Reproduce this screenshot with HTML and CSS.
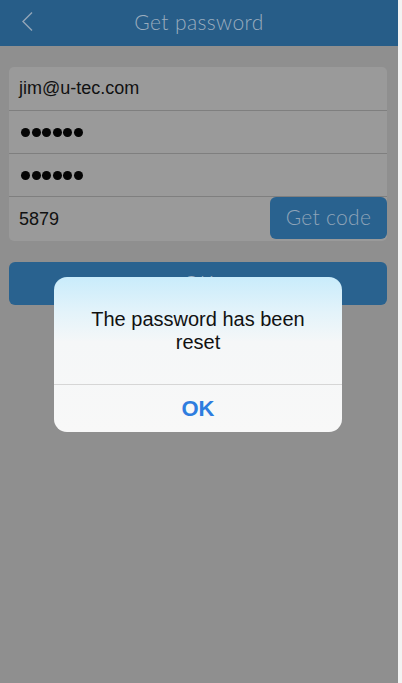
FILE: index.html
```html
<!DOCTYPE html>
<html>
<head>
<meta charset="utf-8">
<link rel="stylesheet" href="styles.css">
</head>
<body>
<div class="page">
  <div class="screen">
    <header class="topbar">
      <svg class="back" width="14" height="22" viewBox="0 0 14 22"><polyline points="10,1.5 1,10.5 10,19.5" fill="none" stroke="#93a6b8" stroke-width="1.4"/></svg>
      <div class="title">Get password</div>
    </header>
    <div class="card">
      <div class="row r1"><span class="val">jim@u-tec.com</span></div>
      <div class="row r2"><span class="dots"><i></i><i></i><i></i><i></i><i></i><i></i></span></div>
      <div class="row r3"><span class="dots"><i></i><i></i><i></i><i></i><i></i><i></i></span></div>
      <div class="row r4"><span class="val">5879</span><button class="code">Get code</button></div>
    </div>
    <button class="ok">OK</button>
    <div class="dialog">
      <div class="msg">The password has been<br>reset</div>
      <div class="dbtn">OK</div>
    </div>
  </div>
  <div class="strip"></div>
</div>
</body>
</html>
```
FILE: styles.css
```css
html, body { margin: 0; padding: 0; }
body { background: #f3f3f3; font-family: "Liberation Sans", Arial, sans-serif; }
.page { display: flex; width: 402px; height: 683px; overflow: hidden; }
.screen { position: relative; width: 398px; height: 683px; background: #8f8f8f; flex: none; }
.strip { flex: 1; background: #f3f3f3; }
.topbar { height: 46px; background: #275d88; display: flex; align-items: center; justify-content: center; position: relative; }
.back { position: absolute; left: 22px; top: 11px; }
.title { font-family: Lato, "Open Sans", sans-serif; font-weight: 300; font-size: 21px; color: #9aacbe; letter-spacing: 0.4px; margin-top: -3px; }
.card { margin: 21px 11px 0 9px; background: #9a9a9a; border-radius: 5px; overflow: hidden; }
.row { display: flex; align-items: center; padding-left: 10px; border-top: 1px solid #7f7f7f; }
.r1 { height: 43px; border-top: none; }
.r2, .r3 { height: 42px; }
.r4 { height: 44px; justify-content: space-between; }
.val { font-size: 18px; color: #111; }
.r1 .val { margin-top: -1px; }
.dots { display: flex; gap: 1.6px; margin-left: 2px; }
.dots i { width: 9px; height: 9px; border-radius: 50%; background: #050505; }
.code { height: 42px; width: 117px; margin-bottom: 1px; align-self: flex-start; border: none; border-radius: 6px; background: #29628f; color: #8fa4b8; font-family: Lato, "Open Sans", sans-serif; font-weight: 300; font-size: 21px; letter-spacing: 0.3px; padding: 0 0 4px; }
.ok { display: block; margin: 21px 11px 0 9px; width: 378px; height: 43px; border: none; border-radius: 6px; background: #29628f; color: #9fb0c0; font-family: Lato, "Open Sans", sans-serif; font-weight: 300; font-size: 21px; padding: 0 0 3px; }
.dialog { position: absolute; left: 54px; top: 277px; width: 288px; height: 155px; border-radius: 13px; overflow: hidden; background: linear-gradient(to bottom, #c9ecfb 0px, #e3f3fa 35px, #f5f7f8 65px, #f8f8f8 100%); display: flex; flex-direction: column; }
.msg { height: 107px; display: flex; align-items: center; justify-content: center; text-align: center; font-size: 20px; line-height: 23px; color: #111; }
.dbtn { flex: 1; border-top: 1px solid #d6d6d6; display: flex; align-items: center; justify-content: center; font-size: 22px; font-weight: bold; color: #2e7ddf; }
```
